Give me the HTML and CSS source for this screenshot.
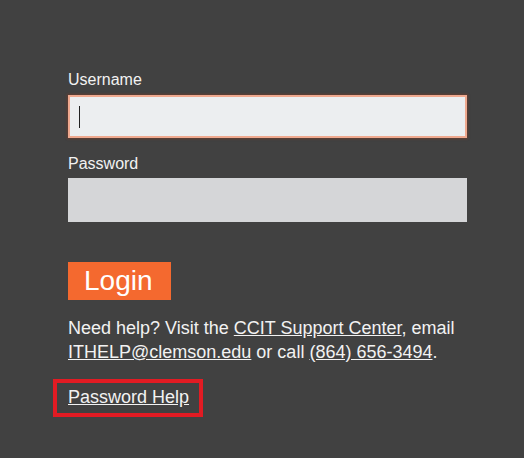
FILE: index.html
```html
<!DOCTYPE html>
<html lang="en">
<head>
<meta charset="utf-8">
<title>Login</title>
<link rel="stylesheet" href="styles.css">
</head>
<body>
<main class="form">
  <div class="label">Username</div>
  <div class="field field-active"><span class="caret"></span></div>
  <div class="label label-pw">Password</div>
  <div class="field field-pw"></div>
  <div class="actions"><span class="btn">Login</span></div>
  <p class="help">Need help? Visit the <a href="#">CCIT Support Center</a>, email <a href="#">ITHELP@clemson.edu</a> or call <a href="#">(864) 656-3494</a>.</p>
  <div class="pwhelp-row"><div class="pwhelp"><a href="#">Password Help</a></div></div>
</main>
</body>
</html>
```
FILE: styles.css
```css
html, body {
  margin: 0;
  padding: 0;
  background: #414141;
}
body {
  font-family: "Liberation Sans", Arial, sans-serif;
  color: #f2f2f2;
  width: 524px;
  height: 458px;
  overflow: hidden;
}
.form {
  display: flex;
  flex-direction: column;
  width: 399px;
  padding: 71px 0 0 68px;
}
.label {
  font-size: 16px;
  line-height: 18px;
  margin-bottom: 6px;
}
.label-pw {
  margin-top: 17px;
  margin-bottom: 5px;
}
.field {
  box-sizing: border-box;
  height: 43px;
  width: 399px;
  background: #d5d6d8;
  display: flex;
  align-items: center;
}
.field-active {
  background: #eceef0;
  border: 2px solid #efa98f;
  box-shadow: 0 0 2px 1px rgba(120, 60, 40, 0.6);
  padding-left: 9px;
}
.field-pw {
  height: 44px;
}
.caret {
  display: block;
  width: 1px;
  height: 22px;
  background: #222;
}
.actions {
  margin-top: 40px;
  display: flex;
}
.btn {
  background: #f4692f;
  color: #fff;
  font-size: 28px;
  line-height: 38px;
  height: 38px;
  padding: 0 18px 0 16px;
}
.help {
  margin: 16px 0 0;
  font-size: 18px;
  line-height: 24px;
  width: 420px;
}
a {
  color: #f2f2f2;
  text-decoration: underline;
}
.pwhelp-row {
  display: flex;
  margin-top: 15px;
  margin-left: -15px;
}
.pwhelp {
  border: 4px solid #e21b23;
  padding: 2px 10px 4px 11px;
  font-size: 18px;
  line-height: 24px;
}
```
